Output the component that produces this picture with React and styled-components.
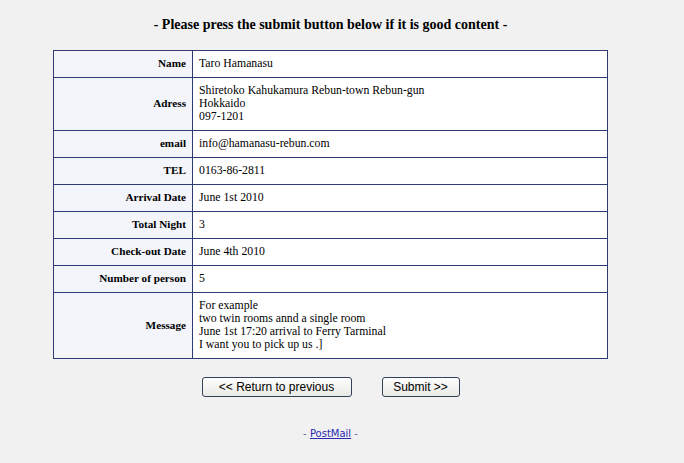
import React from 'react';
import styled, { createGlobalStyle } from 'styled-components';

const GlobalStyle = createGlobalStyle`
	html, body {
		margin:0;
		padding:0;
		background:#f1f1f1;
	}
`

const Page = styled.div`
	width:661px;
	display:flex;
	flex-direction:column;
	align-items:center;
	padding-top:16px;
	font-family:"Liberation Serif", "Times New Roman", serif;
	color:#000;
`

const Title = styled.h1`
	margin:0 0 16px 0;
	font-size:14px;
	line-height:18px;
	font-weight:bold;
`

const Table = styled.table`
	width:555px;
	border-collapse:collapse;
	border:1px solid #2e3b78;
	font-size:11.75px;
	line-height:13px;
`

const Label = styled.th`
	width:126px;
	padding:6px 6px 7px 6px;
	text-align:right;
	font-size:11.2px;
	font-weight:bold;
	background:#f3f5fb;
	border:1px solid #2e3b78;
	vertical-align:middle;
`

const Value = styled.td`
	padding:6px 6px 7px 6px;
	background:#fff;
	border:1px solid #2e3b78;
	text-align:left;
	vertical-align:middle;
`

const Actions = styled.div`
	display:flex;
	gap:30px;
	margin-top:18px;
`

const ActionButton = styled.button`
	width:${props => props.wide ? '150px' : '78px'};
	height:20px;
	padding:0;
	font-family:"Liberation Sans", Arial, sans-serif;
	font-size:12px;
	color:#000;
	background:linear-gradient(#fefefe, #e9e9e4);
	border:1px solid #33415a;
	border-radius:3px;
`

const Footer = styled.div`
	margin-top:31px;
	font-family:"DejaVu Sans", Verdana, sans-serif;
	font-size:10px;
	color:#5a6a9a;
	a {
		color:#2a2ab0;
		text-decoration:underline;
	}
`

const rows = [
	['Name', ['Taro Hamanasu']],
	['Adress', ['Shiretoko Kahukamura Rebun-town Rebun-gun', 'Hokkaido', '097-1201']],
	['email', ['info@hamanasu-rebun.com']],
	['TEL', ['0163-86-2811']],
	['Arrival Date', ['June 1st 2010']],
	['Total Night', ['3']],
	['Check-out Date', ['June 4th 2010']],
	['Number of person', ['5']],
	['Message', ['For example', 'two twin rooms annd a single room', 'June 1st 17:20 arrival to Ferry Tarminal', 'I want you to pick up us .]']],
]

export default function App(){
	return (
		<>
			<GlobalStyle />
			<Page>
				<Title>- Please press the submit button below if it is good content -</Title>
				<Table>
					<tbody>
						{rows.map(([label, lines]) => (
							<tr key={label}>
								<Label>{label}</Label>
								<Value>
									{lines.map((l, i) => <div key={i}>{l}</div>)}
								</Value>
							</tr>
						))}
					</tbody>
				</Table>
				<Actions>
					<ActionButton wide>&lt;&lt; Return to previous</ActionButton>
					<ActionButton>Submit &gt;&gt;</ActionButton>
				</Actions>
				<Footer>- <a href="#">PostMail</a> -</Footer>
			</Page>
		</>
	)
}
